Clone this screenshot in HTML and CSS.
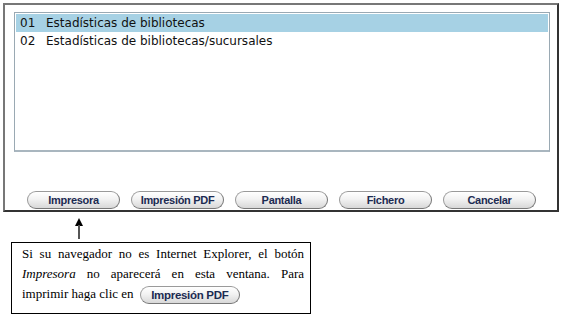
FILE: index.html
```html
<!DOCTYPE html>
<html>
<head>
<meta charset="utf-8">
<link rel="stylesheet" href="styles.css">
</head>
<body>
<div class="dialog">
  <div class="list">
    <div class="row selected"><span class="num">01</span>Estadísticas de bibliotecas</div>
    <div class="row"><span class="num">02</span>Estadísticas de bibliotecas/sucursales</div>
  </div>
  <div class="buttons">
    <span class="btn">Impresora</span>
    <span class="btn">Impresión PDF</span>
    <span class="btn">Pantalla</span>
    <span class="btn">Fichero</span>
    <span class="btn">Cancelar</span>
  </div>
</div>
<div class="arrow-wrap">
  <svg class="arrow" width="10" height="21" viewBox="0 0 10 21">
    <polygon points="5,0 9,8 1,8" fill="#000"/>
    <rect x="4" y="7" width="2" height="14" fill="#555"/>
  </svg>
</div>
<div class="note">
  Si su navegador no es Internet Explorer, el botón <i>Impresora</i> no aparecerá en esta ventana. Para imprimir haga clic en <span class="btn inline">Impresión PDF</span>
</div>
</body>
</html>
```
FILE: styles.css
```css
html, body { margin: 0; padding: 0; background: #fff; }
body { padding: 3px 0 0 3px; }
.dialog {
  width: 556px;
  height: 209px;
  box-sizing: border-box;
  border-top: 2px solid #777;
  border-left: 2px solid #777;
  border-right: 2px solid #333;
  border-bottom: 2px solid #333;
  padding: 7px 7px 0 9px;
  display: flex;
  flex-direction: column;
}
.list {
  height: 140px;
  box-sizing: border-box;
  border: 1px solid #9aa9b3;
  border-bottom: 2px solid #a9b6bf;
  padding: 1px 1px 0 1px;
  font-family: "DejaVu Sans", Verdana, sans-serif;
  font-size: 12px;
  color: #111;
}
.row { height: 18px; line-height: 18px; padding-left: 4px; }
.row.selected { background: #a6d1e4; }
.num { display: inline-block; width: 26px; }
.buttons {
  margin-top: 39px;
  padding-left: 13px;
  display: flex;
  gap: 11px;
}
.btn {
  display: inline-block;
  width: 93px;
  height: 18px;
  box-sizing: border-box;
  border-radius: 9px;
  border: 1px solid #9a9a9a;
  border-right-color: #777;
  border-bottom-color: #777;
  background: linear-gradient(#ffffff 0%, #f2f2f2 45%, #d8d8d8 100%);
  font-family: "Liberation Sans", Arial, sans-serif;
  font-weight: bold;
  font-size: 11px;
  line-height: 16px;
  text-align: center;
  color: #1c2b52;
  letter-spacing: -0.3px;
}
.arrow-wrap { padding-left: 71px; height: 21px; margin-top: 6px; }
.arrow { display: block; }
.note {
  margin-left: 8px;
  margin-top: 3px;
  width: 300px;
  height: 72px;
  box-sizing: border-box;
  border: 1px solid #000;
  padding: 1px 6px 0 10px;
  font-family: "Liberation Serif", "Times New Roman", serif;
  font-size: 13px;
  line-height: 20px;
  text-align: justify;
  color: #000;
}
.btn.inline {
  width: 100px;
  height: 18px;
  vertical-align: middle;
  margin-left: 3px;
  font-size: 11.5px;
  line-height: 16px;
}
```
